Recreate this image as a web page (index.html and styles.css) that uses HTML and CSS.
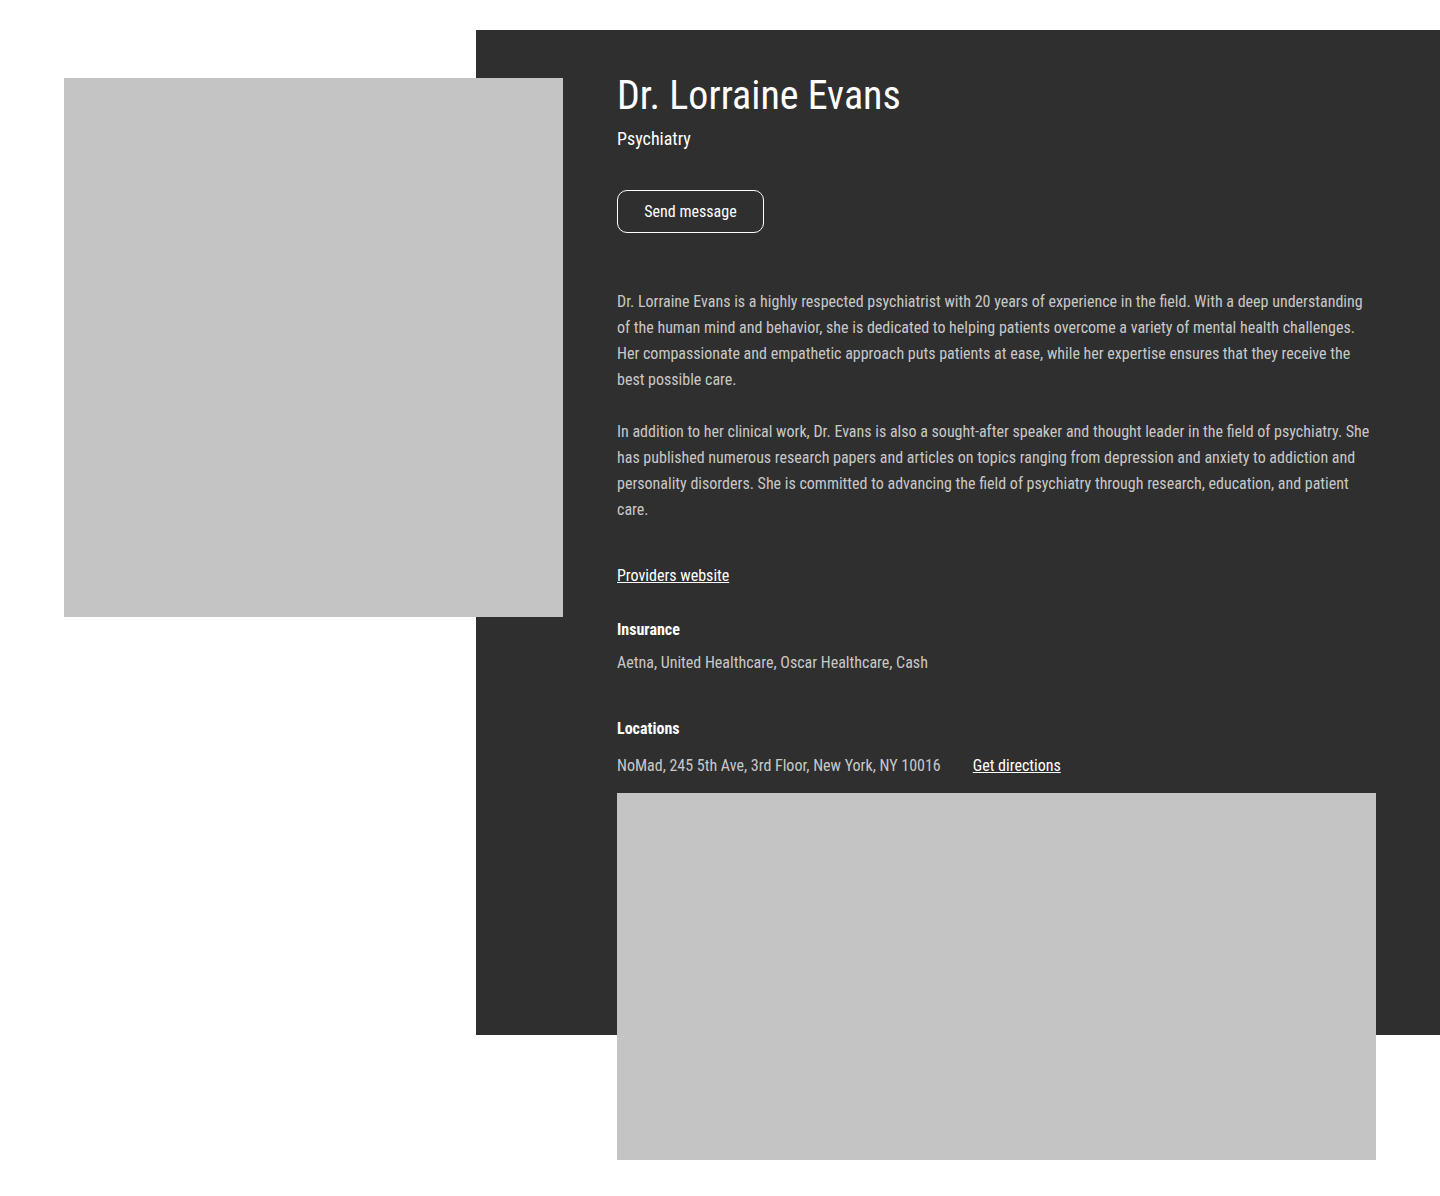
FILE: index.html
```html
<!DOCTYPE html>
<html lang="en">
<head>
    <meta charset="UTF-8">
    <meta name="viewport" content="width=device-width, initial-scale=1.0">
    <title>Dr. Lorraine Evans</title>
    <link rel="stylesheet" href="styles.css">
</head>
<body>
    <div class="profile">
        <div class="photo"></div>

        <div class="panel">
            <h1>Dr. Lorraine Evans</h1>
            <p class="specialty">Psychiatry</p>
            <button class="btn-outline">Send message</button>

            <div class="bio">
                <p>Dr. Lorraine Evans is a highly respected psychiatrist with 20 years of experience in the field. With a deep understanding of the human mind and behavior, she is dedicated to helping patients overcome a variety of mental health challenges. Her compassionate and empathetic approach puts patients at ease, while her expertise ensures that they receive the best possible care.</p>
                <p>In addition to her clinical work, Dr. Evans is also a sought-after speaker and thought leader in the field of psychiatry. She has published numerous research papers and articles on topics ranging from depression and anxiety to addiction and personality disorders. She is committed to advancing the field of psychiatry through research, education, and patient care.</p>
            </div>

            <a class="link" href="#">Providers website</a>

            <div class="info">
                <h3>Insurance</h3>
                <p>Aetna, United Healthcare, Oscar Healthcare, Cash</p>
            </div>

            <div class="info">
                <h3>Locations</h3>
                <div class="location">
                    <span>NoMad, 245 5th Ave, 3rd Floor, New York, NY 10016</span>
                    <a class="link" href="#">Get directions</a>
                </div>
            </div>

            <div class="map"></div>
        </div>
    </div>
</body>
</html>
```

FILE: styles.css
```css
body {
    margin: 0;
    background: #fff;
    font-family: "Roboto Condensed", "Liberation Sans Narrow", "DejaVu Sans Condensed", sans-serif;
    font-stretch: condensed;
}
.profile {
    display: flex;
    align-items: flex-start;
    padding-top: 30px;
    padding-bottom: 161px;
}
.photo {
    flex: none;
    width: 499px;
    height: 539px;
    margin: 48px -87px 0 64px;
    background: #c4c4c4;
    position: relative;
    z-index: 1;
}
.panel {
    flex: 1;
    background: #2f2f2f;
    padding: 48px 64px 0 141px;
    color: #fff;
}
h1 {
    margin: 0;
    font-size: 40px;
    font-weight: 400;
    line-height: 36px;
}
.specialty {
    margin: 13px 0 0;
    font-size: 18px;
    line-height: 24px;
}
.btn-outline {
    display: block;
    margin-top: 39px;
    width: 147px;
    height: 43px;
    background: transparent;
    color: #fff;
    border: 1px solid #fff;
    border-radius: 10px;
    font-family: inherit;
    font-stretch: condensed;
    font-size: 16px;
    cursor: pointer;
}
.bio {
    margin-top: 56px;
    color: #c8c8c8;
    font-size: 16px;
    line-height: 26px;
}
.bio p {
    margin: 0 0 26px;
}
.bio p:last-child {
    margin-bottom: 0;
}
.link {
    display: inline-block;
    color: #fff;
    font-size: 16px;
    line-height: 20px;
    text-decoration: underline;
}
.bio + .link {
    margin-top: 43px;
}
.info {
    margin-top: 34px;
}
.info h3 {
    margin: 0;
    font-size: 16px;
    font-weight: 700;
    line-height: 20px;
}
.info p {
    margin: 13px 0 0;
    color: #c8c8c8;
    font-size: 16px;
    line-height: 20px;
}
.info + .info {
    margin-top: 46px;
}
.location {
    display: flex;
    gap: 32px;
    margin-top: 17px;
    color: #c8c8c8;
    font-size: 16px;
    line-height: 20px;
}
.map {
    height: 367px;
    margin-top: 17px;
    margin-bottom: -125px;
    background: #c4c4c4;
}
```
